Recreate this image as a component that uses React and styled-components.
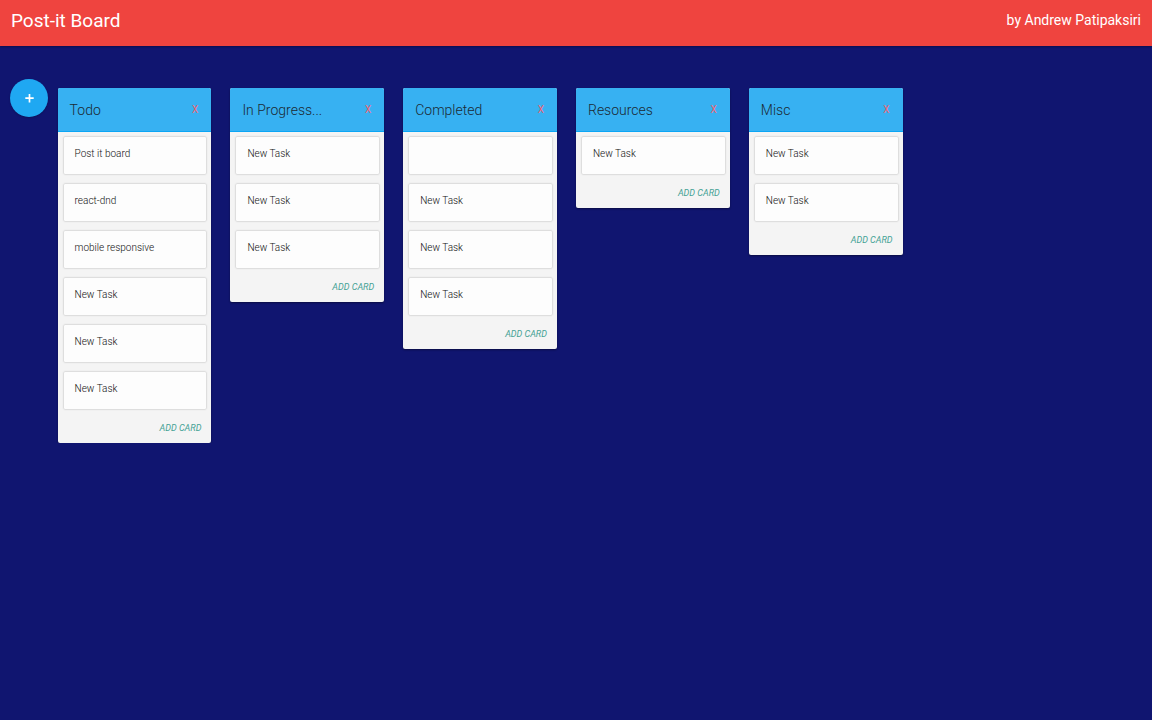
import React, { useState } from "react";
import styled, { createGlobalStyle } from "styled-components";

const GlobalStyle = createGlobalStyle`
  *, *::before, *::after { box-sizing: border-box; }
  body {
    margin: 0;
    background: #101570;
    font-family: Roboto, "Liberation Sans", sans-serif;
  }
  button { font-family: inherit; border: 0; padding: 0; background: none; cursor: pointer; }
`;

const NavBar = styled.header`
  display: flex;
  justify-content: space-between;
  height: 46px;
  padding: 0 11px;
  line-height: 41px;
  color: #ffffff;
  background: #ef443f;
  box-shadow: 0 1px 2px rgba(0, 0, 0, 0.3);
`;

const Brand = styled.h1`
  margin: 0;
  font-size: 19px;
  font-weight: 400;
`;

const Author = styled.span`
  font-size: 14px;
`;

const Board = styled.main`
  display: grid;
  grid-template-columns: 5% repeat(5, 15%);
  align-items: start;
  padding-top: 33px;
`;

const AddListButton = styled.button`
  display: flex;
  align-items: center;
  justify-content: center;
  justify-self: center;
  width: 38px;
  height: 38px;
  border-radius: 50%;
  background: #1fa8f2;
  box-shadow: 0 1px 2px rgba(0, 0, 0, 0.2);
`;

const List = styled.section`
  margin: 9px 19px 0 0;
  overflow: hidden;
  border-radius: 2px;
  background: #f4f4f4;
  box-shadow: 0 1px 2px rgba(0, 0, 0, 0.4);
`;

const ListHeader = styled.div`
  display: flex;
  align-items: center;
  justify-content: space-between;
  height: 44px;
  padding: 0 13px 0 12px;
  background: #37b1f2;
  border-bottom: 1px solid #0ba6f5;
`;

const ListTitle = styled.h2`
  margin: 0;
  font-size: 14px;
  font-weight: 300;
  color: #1c2a34;
`;

const RemoveButton = styled.button`
  font-size: 10px;
  line-height: 14px;
  color: #ee6673;
`;

const Cards = styled.ul`
  display: flex;
  flex-direction: column;
  gap: 10px;
  margin: 0;
  padding: 5px 5px 0 6px;
  list-style: none;
`;

const Card = styled.li`
  height: 37px;
  padding: 0 11px;
  border-radius: 1px;
  background: #fdfdfd;
  box-shadow: 0 0 2px rgba(0, 0, 0, 0.35);
  font-size: 10px;
  font-weight: 300;
  line-height: 34px;
  color: #111111;
`;

const ListFooter = styled.div`
  display: flex;
  justify-content: flex-end;
  height: 34px;
  padding: 0 10px;
`;

const AddCardButton = styled.button`
  font-size: 9px;
  line-height: 38px;
  font-style: italic;
  color: #45a294;
`;

const initialLists = [
  { title: "Todo", cards: ["Post it board", "react-dnd", "mobile responsive", "New Task", "New Task", "New Task"] },
  { title: "In Progress...", cards: ["New Task", "New Task", "New Task"] },
  { title: "Completed", cards: ["", "New Task", "New Task", "New Task"] },
  { title: "Resources", cards: ["New Task"] },
  { title: "Misc", cards: ["New Task", "New Task"] },
];

export default function App() {
  const [lists, setLists] = useState(initialLists);
  const addList = () => setLists([...lists, { title: "New List", cards: [] }]);
  const removeList = (index) => setLists(lists.filter((_, i) => i !== index));
  const addCard = (index) =>
    setLists(lists.map((list, i) => (i === index ? { ...list, cards: [...list.cards, "New Task"] } : list)));

  return (
    <>
      <GlobalStyle />
      <NavBar>
        <Brand>Post-it Board</Brand>
        <Author>by Andrew Patipaksiri</Author>
      </NavBar>
      <Board>
        <AddListButton type="button" aria-label="Add list" onClick={addList}>
          <svg width="10" height="10" viewBox="0 0 10 10" fill="none" stroke="#fff" strokeWidth="1.7">
            <path d="M5.5 1v8.4M1.3 5.2h8.4" />
          </svg>
        </AddListButton>
        {lists.map((list, index) => (
          <List key={index}>
            <ListHeader>
              <ListTitle>{list.title}</ListTitle>
              <RemoveButton type="button" onClick={() => removeList(index)}>X</RemoveButton>
            </ListHeader>
            <Cards>
              {list.cards.map((card, i) => (
                <Card key={i}>{card}</Card>
              ))}
            </Cards>
            <ListFooter>
              <AddCardButton type="button" onClick={() => addCard(index)}>ADD CARD</AddCardButton>
            </ListFooter>
          </List>
        ))}
      </Board>
    </>
  );
}
